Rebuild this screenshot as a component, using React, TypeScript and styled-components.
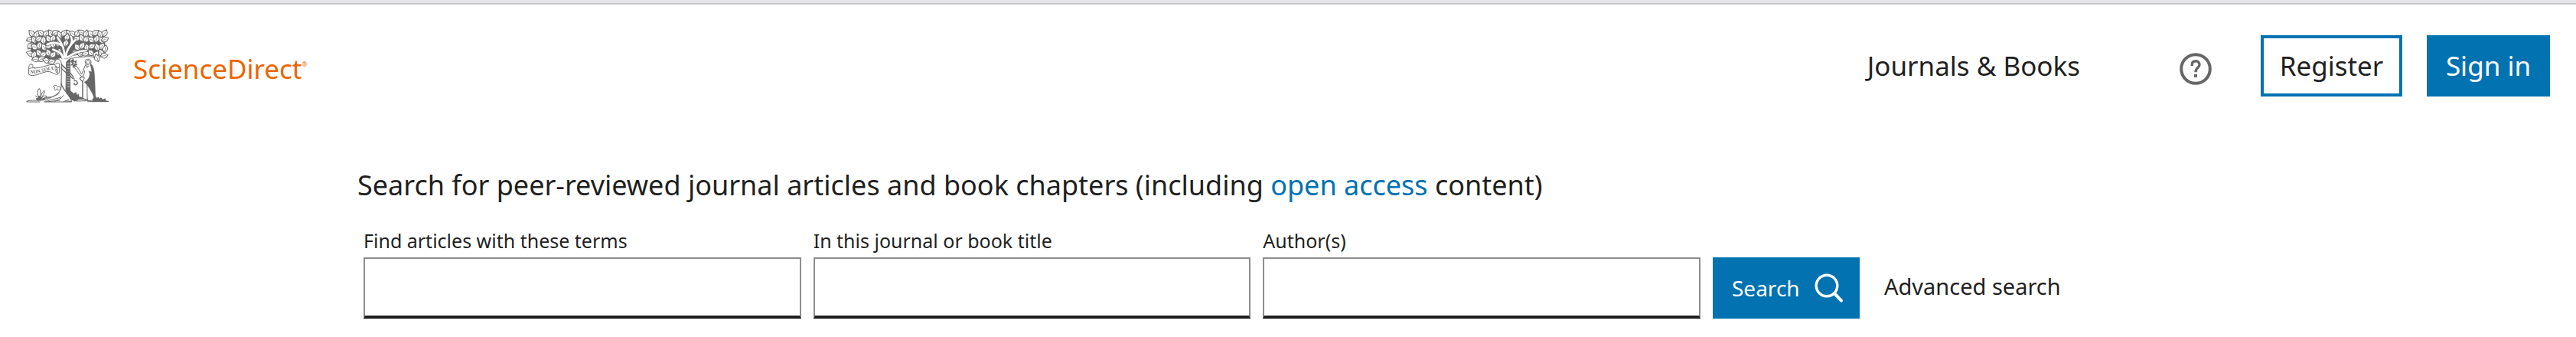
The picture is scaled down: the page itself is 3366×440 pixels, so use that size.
import React from "react";
import styled, { createGlobalStyle } from "styled-components";

const GlobalStyle = createGlobalStyle`
  *, *::before, *::after { box-sizing: border-box; }
  body {
    margin: 0;
    background: #fff;
    color: #1f1f1f;
    font-family: "Noto Sans", "Open Sans", sans-serif;
  }
`;

const BrowserEdge = styled.div`
  height: 6px;
  background: #e5e4eb;
  border-bottom: 2px solid #c8c7ce;
`;

const Header = styled.header`
  display: flex;
  align-items: center;
  justify-content: space-between;
  padding: 32px 34px 28px;
`;

const Brand = styled.a`
  display: flex;
  align-items: center;
  gap: 32px;
  color: #eb6500;
  text-decoration: none;
`;

const BrandName = styled.span`
  padding-top: 8px;
  font-size: 35px;
  line-height: 40px;
`;

const Registered = styled.sup`
  font-size: 8px;
  line-height: 8px;
  vertical-align: 16px;
`;

const HeaderNav = styled.nav`
  display: flex;
  align-items: center;
`;

const NavLink = styled.a`
  margin-right: 130px;
  color: #1f1f1f;
  font-size: 35px;
  line-height: 48px;
  text-decoration: none;
`;

const HelpButton = styled.button`
  display: flex;
  margin: 8px 64px 0 0;
  padding: 0;
  border: 0;
  background: none;
  color: #666;
`;

const Account = styled.div`
  display: flex;
  gap: 32px;
`;

const AccountButton = styled.button<{ $primary?: boolean }>`
  width: ${(p) => (p.$primary ? 161 : 185)}px;
  height: 80px;
  padding: 0;
  border: 4px solid #0272b1;
  background: ${(p) => (p.$primary ? "#0272b1" : "#fff")};
  color: ${(p) => (p.$primary ? "#fff" : "#1f1f1f")};
  font: 35px/48px "Noto Sans", "Open Sans", sans-serif;
`;

const Main = styled.main`
  max-width: 2432px;
  margin: 0 auto;
  padding: 56px 0 24px;
`;

const Title = styled.h1`
  margin: 0;
  font-size: 36px;
  font-weight: 400;
  line-height: 48px;
`;

const TextLink = styled.a`
  color: #0272b1;
  text-decoration: none;
`;

const SearchForm = styled.form`
  display: flex;
  align-items: flex-end;
  gap: 16px;
  margin-top: 32px;
  padding: 0 8px;
`;

const Fields = styled.div`
  display: grid;
  flex: 0 1 1747px;
  grid-template-columns: repeat(3, 1fr);
  gap: 16px;
`;

const Field = styled.label`
  display: flex;
  flex-direction: column;
  gap: 6px;
  font-size: 25px;
  line-height: 32px;
`;

const TextInput = styled.input`
  width: 100%;
  height: 80px;
  padding: 0 16px;
  border: 2px solid #8e8e8e;
  border-bottom: 4px solid #1f1f1f;
  border-radius: 0;
  outline: 0;
  background: #fff;
  font: 28px/40px "Noto Sans", "Open Sans", sans-serif;
`;

const SearchButton = styled.button`
  display: flex;
  align-items: center;
  justify-content: space-between;
  width: 192px;
  height: 80px;
  padding: 0 21px 0 25px;
  border: 0;
  background: #0272b1;
  color: #fff;
  font: 28px/40px "Noto Sans", "Open Sans", sans-serif;
`;

const AdvancedLink = styled.a`
  margin-left: 16px;
  color: #1f1f1f;
  font-size: 29px;
  line-height: 76px;
  padding-bottom: 4px;
  text-decoration: none;
`;

/* Leaves of the crown: centre x, centre y, rotation in degrees. */
const leaves: [number, number, number][] = [
  [124, 130, -40], [143, 134, 20], [161, 129, -55], [180, 132, 30], [199, 130, -30],
  [217, 127, 65], [234, 136, -25], [251, 129, 40], [268, 131, -20], [285, 132, -50],
  [303, 130, 25], [320, 127, -60], [337, 131, 15], [355, 132, -40], [374, 128, 50],
  [392, 134, -20], [410, 129, 30], [118, 154, 80], [133, 155, -20], [152, 151, 60],
  [170, 157, 0], [190, 151, -35], [207, 149, 20], [262, 145, 10], [300, 150, 60],
  [320, 148, -20], [339, 152, 45], [358, 155, -60], [378, 151, 20], [397, 156, -30],
  [411, 153, 70], [119, 178, 40], [135, 183, -50], [154, 177, 10], [172, 184, -30],
  [191, 178, 50], [208, 172, 0], [228, 168, 15], [258, 168, 15], [302, 184, -40],
  [322, 178, 30], [340, 185, -10], [360, 180, 60], [380, 184, -15], [399, 180, 35],
  [412, 190, 10], [118, 209, -70], [133, 213, 20], [152, 206, -30], [170, 212, 60],
  [189, 205, -20], [208, 213, 40], [230, 202, 20], [294, 205, 65], [314, 208, -15],
  [335, 208, 70], [356, 206, -40], [376, 212, 30], [396, 206, -25], [408, 217, 80],
  [140, 231, 85], [162, 230, 60], [182, 236, -70], [203, 240, 75], [380, 226, -20],
];

const TreeLogo = () => (
  <svg width="108" height="96" viewBox="102 113 324 288" fill="none" stroke="#666" strokeWidth="3" strokeLinecap="round" strokeLinejoin="round" aria-hidden="true">
    <path d="M121 130 160 126 215 132 265 124 315 130 370 127 411 132 412 170 409 212 370 218 288 214 210 234 157 226 120 212 120 180Z" fill="#666" stroke="none" />
    {leaves.map(([x, y, r]) => (
      <g key={`${x}-${y}`} transform={`translate(${x} ${y}) rotate(${r})`}>
        <path d="M0-16C3-11 10-8 10-2 12 4 5 11 1 16-3 12-10 8-10 2-11-4-3-10 0-16Z" fill="#fff" />
        <path d="M1 13C-1 7 2 2 0-5" strokeWidth="2" />
      </g>
    ))}
    <path d="M246 228C244 208 233 202 208 193M253 225C253 195 247 176 225 145M258 225C258 202 268 180 296 155M265 223C285 210 303 199 337 197M240 176C224 164 205 164 185 173M276 177C286 158 282 148 277 142" strokeWidth="12" />
    <path d="M246 228C244 208 233 202 208 193M253 225C253 195 247 176 225 145M258 225C258 202 268 180 296 155M265 223C285 210 303 199 337 197M240 176C224 164 205 164 185 173M276 177C286 158 282 148 277 142" stroke="#fff" strokeWidth="8" />
    <path d="M219 231C236 228 242 239 241 260L240 340C238 357 226 370 193 384L174 398H281L263 343 261 243C266 227 289 225 322 222 344 220 358 218 371 226" fill="#fff" />
    <path d="M261 241 275 229V352L286 374 307 389 293 396 277 387 258 354Z" fill="#666" strokeWidth="2" />
    <path d="M264 248h7M264 258h8M264 268h7M264 278h8M264 288h7M264 298h8M264 308h7M264 318h8M264 328h7M264 338h8" stroke="#fff" strokeWidth="2" />
    <path d="M241 251C254 269 283 282 291 310M291 316C303 312 308 327 298 331 292 332 288 328 292 325M239 326C249 352 266 369 283 390M240 264C247 280 271 288 284 306" strokeWidth="4" />
    <path d="M210 336C218 330 224 334 226 341 233 333 237 338 236 349 230 355 225 354 224 346 217 359 208 350 214 343Z" fill="#fff" />
    <path d="M123 251C119 246 112 255 113 269V291C132 302 157 285 181 280 202 276 211 292 225 290 236 286 232 270 233 255 235 241 222 246 215 252 185 249 157 271 130 264 126 261 134 250 123 251ZM113 270C120 263 128 264 137 266M214 253C221 257 218 267 230 264M222 283C216 276 217 269 225 271V286" fill="#fff" />
    <path id="ribbon" d="M118 286C145 292 175 272 225 271" stroke="none" />
    <text fill="#666" stroke="none" fontFamily="Liberation Serif, serif" fontSize="19" fontWeight="700">
      <textPath href="#ribbon">NON SOLUS</textPath>
    </text>
    <path d="M277 239 287 229 290 240 301 236 297 247 303 252 293 258 287 265 285 253 277 255 284 247Z" fill="#666" strokeWidth="2" />
    <path d="M286 243l10 5M289 253l4-10" stroke="#fff" strokeWidth="2" />
    <path d="M297 257C307 263 310 276 320 290C325 285 327 270 332 260L337 251C329 235 337 229 350 231 360 237 357 247 354 252L367 275 370 382 358 393H340L324 384V321L313 306 320 298C309 291 305 278 293 265Z" fill="#fff" />
    <path d="M355 248C367 257 369 276 371 302L374 390 361 363C352 345 343 333 331 320 343 315 352 304 352 286L348 278 360 281Z" fill="#666" strokeWidth="2" />
    <path d="M338 242 345 253 353 243M341 253v11l7-8M331 276C335 284 325 293 324 303M318 301Q324 295 331 304L326 316Q318 318 314 310ZM324 317V380M341 331C343 352 340 369 343 389M338 240q7-9 15 0" />
    <path d="M277 355 290 365 298 359 302 371 309 366 310 378 320 379 333 389 288 389Z" fill="#666" stroke="none" />
    <path d="M371 369 379 382 387 379 389 386 396 381 403 388 413 384 415 393 425 395V398H360Z" fill="#666" stroke="none" />
    <path d="M153 386C143 367 148 348 154 345 160 354 160 370 158 386ZM160 378C163 364 168 354 175 355 174 364 167 376 162 384ZM163 383C172 373 178 372 184 377 178 382 168 385 163 387ZM149 385 140 374M169 387C180 383 187 377 197 380" />
    <path d="M153 376v14M159 380v10M144 386l5 5M168 388l6-1" strokeWidth="6" />
    <path d="M104 396C123 388 149 395 172 391 189 378 215 380 232 364M106 398H156M180 398C201 386 219 389 239 379M191 397 235 392M214 398C230 383 239 390 248 373M249 397 270 389M258 395 278 396M296 391C315 377 327 388 344 389V397H365M365 397H425M300 395 337 394" />
  </svg>
);

const HelpIcon = () => (
  <svg width="42" height="42" viewBox="0 0 42 42" fill="none" stroke="currentColor" aria-hidden="true">
    <circle cx="21" cy="21" r="18.8" strokeWidth="4" />
    <path d="M16.3 17V15.3C16.3 12.5 18.2 10.8 21.2 10.8S26 12.8 26 15.4C26 19.5 21 19.3 21 25.3" strokeWidth="3.4" />
    <path d="M21 28v4" strokeWidth="4" />
  </svg>
);

const SearchIcon = () => (
  <svg width="38" height="40" viewBox="0 0 38 40" fill="none" stroke="currentColor" strokeLinecap="round" aria-hidden="true">
    <circle cx="16" cy="17" r="13.8" strokeWidth="3.4" />
    <path d="M26 27 35 36.5" strokeWidth="4" />
  </svg>
);

const searchFields = [
  { name: "qs", label: "Find articles with these terms" },
  { name: "pub", label: "In this journal or book title" },
  { name: "authors", label: "Author(s)" },
];

export default function App() {
  return (
    <>
      <GlobalStyle />
      <BrowserEdge />
      <Header>
        <Brand href="#home">
          <TreeLogo />
          <BrandName>
            ScienceDirect<Registered>®</Registered>
          </BrandName>
        </Brand>
        <HeaderNav>
          <NavLink href="#journals">Journals &amp; Books</NavLink>
          <HelpButton type="button" aria-label="Help">
            <HelpIcon />
          </HelpButton>
          <Account>
            <AccountButton type="button">Register</AccountButton>
            <AccountButton type="button" $primary>Sign in</AccountButton>
          </Account>
        </HeaderNav>
      </Header>
      <Main>
        <Title>
          Search for peer-reviewed journal articles and book chapters (including{" "}
          <TextLink href="#open-access">open access</TextLink> content)
        </Title>
        <SearchForm onSubmit={(e) => e.preventDefault()}>
          <Fields>
            {searchFields.map((f) => (
              <Field key={f.name}>
                {f.label}
                <TextInput type="text" name={f.name} />
              </Field>
            ))}
          </Fields>
          <SearchButton type="submit">
            Search
            <SearchIcon />
          </SearchButton>
          <AdvancedLink href="#advanced">Advanced search</AdvancedLink>
        </SearchForm>
      </Main>
    </>
  );
}
